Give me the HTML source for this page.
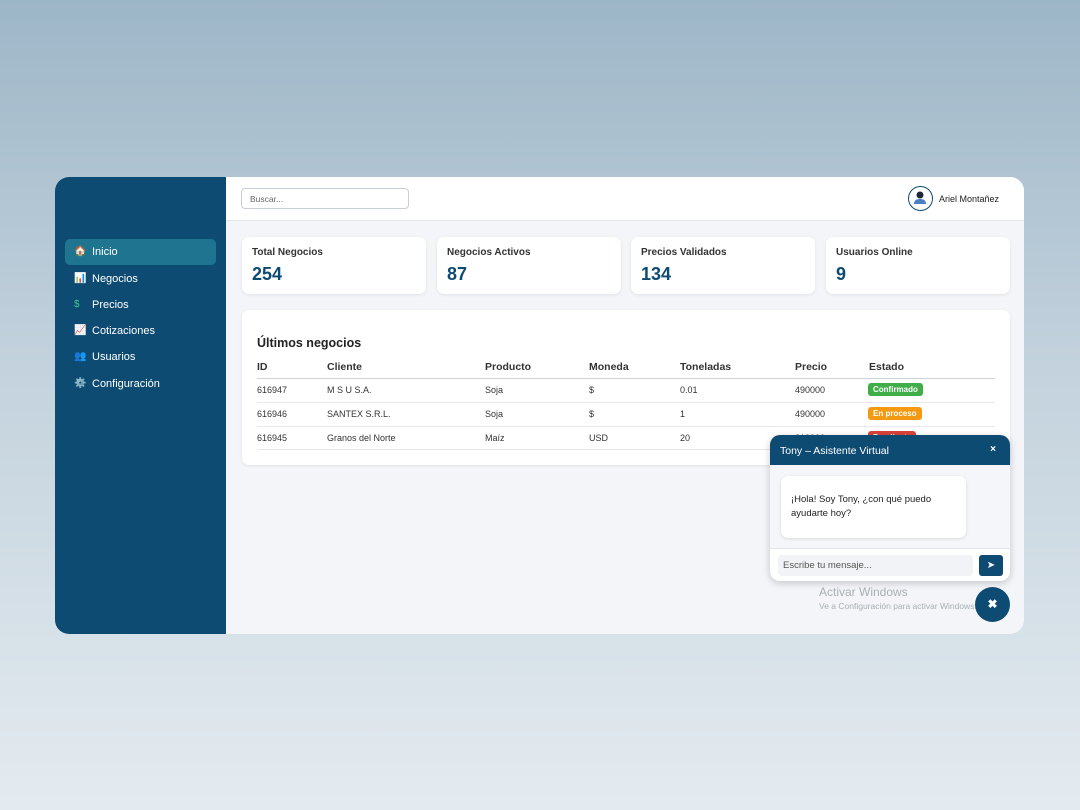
<!DOCTYPE html>
<html><head><meta charset="utf-8"><style>
*{box-sizing:border-box;margin:0;padding:0}
body{width:1080px;height:810px;overflow:hidden;font-family:"Liberation Sans",sans-serif;background:linear-gradient(180deg,#9db6c7 0%,#c3d2dd 45%,#e4ebf0 100%);position:relative}
.app{position:absolute;left:55px;top:177px;width:969px;height:457px;border-radius:14px;overflow:hidden;background:#f3f5f9}
.side{position:absolute;left:0;top:0;width:171px;height:100%;background:#0e4b73}
.nav{position:absolute;left:10px;width:151px;height:26px;border-radius:5px;color:#fff;font-size:11px;line-height:26px;padding-left:27px}
.nav.act{background:#1f7590}
.nav i{position:absolute;left:9px;top:0;font-style:normal;font-size:10px}
.top{position:absolute;left:171px;top:0;right:0;height:44px;background:#fff;border-bottom:1px solid #e3e7ec}
.search{position:absolute;left:15px;top:11px;width:168px;height:21px;border:1px solid #c9ced4;border-radius:4px;font-size:8.5px;color:#666;padding:5px 8px}
.av{position:absolute;left:682px;top:9px;width:25px;height:25px;border:1.5px solid #0e4b73;border-radius:50%}
.user{position:absolute;left:713px;top:17px;font-size:9px;color:#222}
.stat{position:absolute;top:60px;width:184px;height:57px;background:#fff;border-radius:7px;box-shadow:0 1px 3px rgba(0,0,0,.08)}
.stat b{position:absolute;left:10px;top:10px;font-size:10px;color:#333;font-weight:bold}
.stat span{position:absolute;left:10px;top:27px;font-size:18px;color:#0e4b73;font-weight:bold}
.tbl{position:absolute;left:187px;top:133px;width:768px;height:155px;background:#fff;border-radius:7px;box-shadow:0 1px 3px rgba(0,0,0,.08)}
.tbl h3{position:absolute;left:15px;top:26px;font-size:12.5px;color:#222}
.c{position:absolute;font-size:9px;color:#333}
.h{font-weight:bold;font-size:10.5px;color:#333}
.ln{position:absolute;left:15px;width:738px;height:1px;background:#e6e8eb}
.badge{position:absolute;color:#fff;font-size:8px;font-weight:bold;padding:2px 5px;border-radius:3px}
.chat{position:absolute;left:770px;top:435px;width:240px;height:146px;background:#f4f6f9;border-radius:10px;overflow:hidden;box-shadow:0 2px 8px rgba(0,0,0,.2)}
.ch{height:30px;background:#0e4b73;color:#fff;font-size:10.5px;padding:10px 10px}
.ch em{position:absolute;right:14px;top:9px;font-style:normal;font-size:10px;font-weight:bold}
.msg{position:absolute;left:11px;top:41px;width:185px;height:62px;background:#fff;border-radius:7px;box-shadow:0 1px 3px rgba(0,0,0,.12);font-size:9.5px;color:#222;padding:17px 10px;line-height:14px}
.inp{position:absolute;left:0;top:113px;width:100%;height:33px;background:#fff;border-top:1px solid #e2e5ea}
.inp div{position:absolute;left:8px;top:6px;width:195px;height:21px;background:#f1f3f6;border-radius:4px;font-size:9.5px;color:#555;padding:5px 5px}
.send{position:absolute;left:209px;top:6px;width:24px;height:21px;background:#0e4b73;border-radius:3px;color:#fff;font-size:10px;text-align:center;line-height:21px}
.fab{position:absolute;left:975px;top:587px;width:35px;height:35px;border-radius:50%;background:#0e4b73;color:#fff;text-align:center;line-height:35px;font-size:12px;font-weight:bold}
.win{position:absolute;left:819px;color:#a9afb6}
</style></head><body>
<div class="app">
<div class="side">
<div class="nav act" style="top:62px"><i>🏠</i>Inicio</div>
<div class="nav" style="top:89px"><i>📊</i>Negocios</div>
<div class="nav" style="top:115px"><i style="color:#3cc88e">$</i>Precios</div>
<div class="nav" style="top:141px"><i>📈</i>Cotizaciones</div>
<div class="nav" style="top:167px"><i style="color:#7a3a9a">👥</i>Usuarios</div>
<div class="nav" style="top:194px"><i>⚙️</i>Configuración</div>
</div>
<div class="top"><div class="search">Buscar...</div>
<div class="av"><svg width="22" height="22" viewBox="0 0 22 22"><circle cx="11" cy="8" r="3.5" fill="#1b2a3a"/><path d="M5 17c0-4 3-5 6-5s6 1 6 5z" fill="#4a7fc4"/></svg></div>
<div class="user">Ariel Montañez</div></div>
<div class="stat" style="left:187px"><b>Total Negocios</b><span>254</span></div>
<div class="stat" style="left:382px"><b>Negocios Activos</b><span>87</span></div>
<div class="stat" style="left:576px"><b>Precios Validados</b><span>134</span></div>
<div class="stat" style="left:771px"><b>Usuarios Online</b><span>9</span></div>
<div class="tbl"><h3 style="top:26px">Últimos negocios</h3>
<div class="c h" style="left:15px;top:51px">ID</div><div class="c h" style="left:85px;top:51px">Cliente</div><div class="c h" style="left:243px;top:51px">Producto</div><div class="c h" style="left:347px;top:51px">Moneda</div><div class="c h" style="left:438px;top:51px">Toneladas</div><div class="c h" style="left:553px;top:51px">Precio</div><div class="c h" style="left:627px;top:51px">Estado</div>
<div class="ln" style="top:68px;background:#cfd3d8"></div>
<div class="c" style="left:15px;top:75px">616947</div><div class="c" style="left:85px;top:75px">M S U S.A.</div><div class="c" style="left:243px;top:75px">Soja</div><div class="c" style="left:347px;top:75px">$</div><div class="c" style="left:438px;top:75px">0.01</div><div class="c" style="left:553px;top:75px">490000</div><div class="badge" style="left:626px;top:73px;background:#3fae49">Confirmado</div>
<div class="ln" style="top:92px"></div>
<div class="c" style="left:15px;top:99px">616946</div><div class="c" style="left:85px;top:99px">SANTEX S.R.L.</div><div class="c" style="left:243px;top:99px">Soja</div><div class="c" style="left:347px;top:99px">$</div><div class="c" style="left:438px;top:99px">1</div><div class="c" style="left:553px;top:99px">490000</div><div class="badge" style="left:626px;top:97px;background:#f39a12">En proceso</div>
<div class="ln" style="top:116px"></div>
<div class="c" style="left:15px;top:123px">616945</div><div class="c" style="left:85px;top:123px">Granos del Norte</div><div class="c" style="left:243px;top:123px">Maíz</div><div class="c" style="left:347px;top:123px">USD</div><div class="c" style="left:438px;top:123px">20</div><div class="c" style="left:553px;top:123px">210000</div><div class="badge" style="left:626px;top:121px;background:#d9433a">Pendiente</div>
<div class="ln" style="top:139px"></div>
</div>
</div>
<div class="win" style="top:585px;font-size:12px">Activar Windows</div>
<div class="win" style="top:601px;font-size:8.5px">Ve a Configuración para activar Windows.</div>
<div class="chat"><div class="ch">Tony – Asistente Virtual<em>×</em></div>
<div class="msg">¡Hola! Soy Tony, ¿con qué puedo ayudarte hoy?</div>
<div class="inp"><div>Escribe tu mensaje...</div><span class="send">➤</span></div></div>
<div class="fab">✖</div>
</body></html>
